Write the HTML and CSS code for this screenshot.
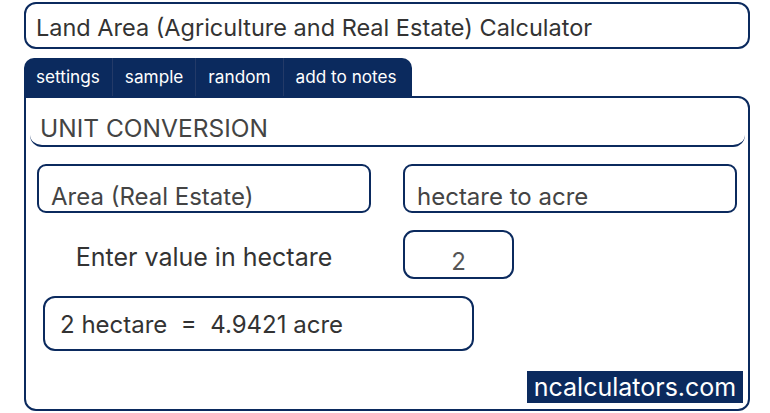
FILE: index.html
```html
<!DOCTYPE html>
<html lang="en">

<head>
    <meta charset="UTF-8">
    <meta name="viewport" content="width=device-width, initial-scale=1.0">
    <title>Land Area (Agriculture and Real Estate) Calculator</title>
    <link rel="stylesheet" href="styles.css">
</head>

<body>
    <div class="calc">
        <div class="calc-title">Land Area (Agriculture and Real Estate) Calculator</div>

        <div class="tabs">
            <span class="tab">settings</span>
            <span class="tab">sample</span>
            <span class="tab">random</span>
            <span class="tab">add to notes</span>
        </div>

        <div class="panel">
            <div class="panel-head">UNIT CONVERSION</div>

            <div class="row">
                <div class="select">Area (Real Estate)</div>
                <div class="select">hectare to acre</div>
            </div>

            <div class="row">
                <div class="label">Enter value in hectare</div>
                <div class="value-col">
                    <div class="value-input">2</div>
                </div>
            </div>

            <div class="result">2 hectare&nbsp; = &nbsp;4.9421 acre</div>

            <div class="brand">ncalculators.com</div>
        </div>
    </div>
</body>

</html>
```
FILE: styles.css
```css
body {
    font-family: Inter, "Open Sans", sans-serif;
    margin: 0;
    padding: 0;
    background-color: #fff;
    color: #333;
}

.calc {
    width: 726px;
    margin-left: 24px;
}

.calc-title {
    display: flex;
    align-items: center;
    box-sizing: border-box;
    height: 47px;
    margin-top: 2px;
    padding: 3px 10px 0 10px;
    border: 2px solid #0b2a5e;
    border-radius: 12px;
    font-size: 23.5px;
    color: #333;
}

.tabs {
    display: flex;
    box-sizing: border-box;
    width: 388px;
    height: 38px;
    margin-top: 9px;
    background-color: #0b2a5e;
    border-radius: 10px 10px 0 0;
}

.tab {
    display: flex;
    align-items: center;
    padding: 0 12px 1px 12px;
    font-size: 17.2px;
    color: #fff;
    border-right: 1px solid #233a68;
}

.tab:last-child {
    border-right: none;
}

.panel {
    display: flex;
    flex-direction: column;
    box-sizing: border-box;
    height: 315px;
    padding: 0 0 5px 0;
    border: 2px solid #0b2a5e;
    border-radius: 0 12px 12px 12px;
}

.panel-head {
    display: flex;
    align-items: flex-end;
    box-sizing: border-box;
    height: 49px;
    margin: 0 3px 0 4px;
    padding: 0 0 2px 10px;
    border-bottom: 2px solid #0b2a5e;
    border-radius: 0 0 12px 12px;
    font-size: 24.5px;
    color: #444;
}

.row {
    display: flex;
    gap: 32px;
    padding: 0 11px;
    margin-top: 17px;
}

.row:first-of-type {
    margin-top: 18px;
}

.select {
    display: flex;
    align-items: flex-end;
    box-sizing: border-box;
    width: 334px;
    height: 49px;
    padding: 0 12px 0 12px;
    border: 2px solid #0b2a5e;
    border-radius: 9px;
    font-size: 24px;
    color: #444;
}

.label {
    display: flex;
    align-items: center;
    justify-content: center;
    width: 334px;
    padding-top: 4px;
    font-size: 25px;
    color: #333;
}

.value-col {
    width: 334px;
}

.value-input {
    display: flex;
    align-items: flex-end;
    justify-content: center;
    box-sizing: border-box;
    width: 111px;
    height: 49px;
    padding-bottom: 1px;
    border: 2px solid #0b2a5e;
    border-radius: 11px;
    font-size: 24px;
    color: #555;
}

.result {
    display: flex;
    align-items: center;
    box-sizing: border-box;
    width: 431px;
    height: 55px;
    margin: 17px 0 0 17px;
    padding: 1px 15px 0 15px;
    border: 2px solid #0b2a5e;
    border-radius: 12px;
    font-size: 24px;
    color: #333;
}

.brand {
    align-self: flex-end;
    box-sizing: border-box;
    width: 216px;
    height: 32px;
    margin: 20px 5px 0 0;
    background-color: #0b2a5e;
    color: #fff;
    font-size: 25px;
    line-height: 32px;
    text-align: center;
}
```
